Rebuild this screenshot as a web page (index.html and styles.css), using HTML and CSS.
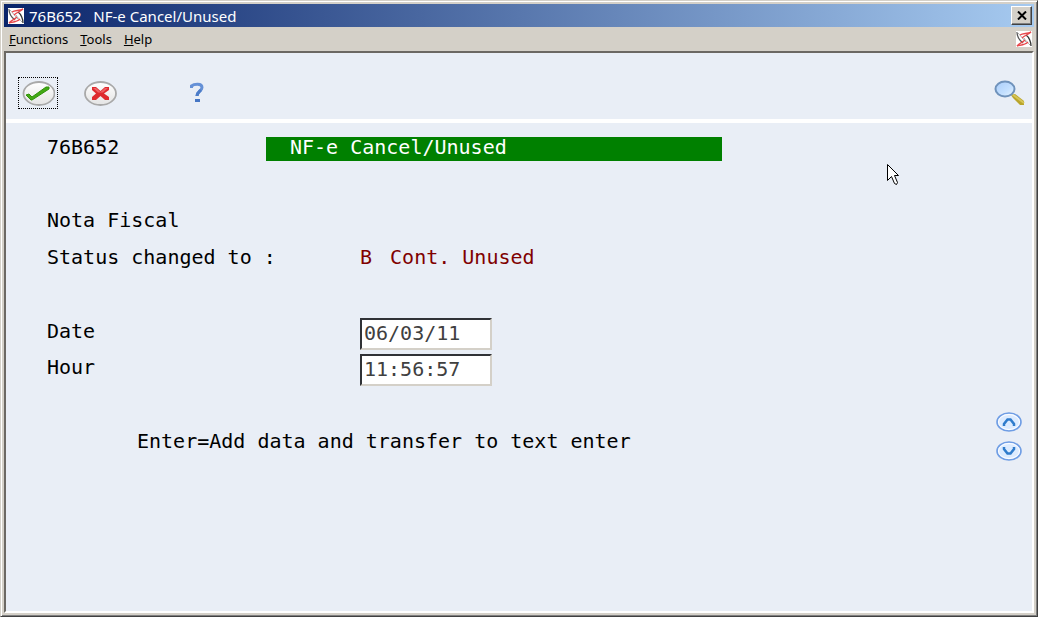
FILE: index.html
```html
<!DOCTYPE html>
<html lang="en">
<head>
<meta charset="utf-8">
<title>76B652 NF-e Cancel/Unused</title>
<link rel="stylesheet" href="styles.css">
</head>
<body>
<svg class="defs" aria-hidden="true">
  <symbol id="logo" viewBox="0 0 16 16">
    <rect width="16" height="16" fill="#fff"/>
    <g fill="none" stroke-width="1.300">
      <path d="M1 1C1 5 3 9 7 12" stroke="#555"/>
      <path d="M1 1C4 4 8 9 10 11" stroke="#aaa" stroke-width="1"/>
      <path d="M15 15C15 11 13 6 10 4" stroke="#333"/>
      <path d="M14 14C12 12 9 9 8 7" stroke="#aaa" stroke-width="1"/>
      <path d="M4 4C7 2 11 3 15 1C12 4 9 4 6 7M1 15C5 14 9 14 12 11M1 15C3 12 6 12 9 9" stroke="#e8484c"/>
    </g>
  </symbol>
  <linearGradient id="face" x1="0" y1="0" x2="0" y2="1"><stop offset="0" stop-color="#fff"/><stop offset="1" stop-color="#e4e4e4"/></linearGradient>
  <linearGradient id="glass" x1="0" y1="0" x2="1" y2="1"><stop offset="0" stop-color="#a9cdfb"/><stop offset=".6" stop-color="#c4e0ff"/><stop offset="1" stop-color="#eaf6ff"/></linearGradient>
</svg>
<div class="window">
  <header class="titlebar">
    <svg class="logo"><use href="#logo"/></svg>
    <h1 class="title">76B652 &nbsp; NF-e Cancel/Unused</h1>
    <button class="close" type="button" aria-label="Close">
      <svg width="10" height="9" viewBox="0 0 10 9"><path d="M1 0.500L9 8.500M9 0.500L1 8.500" stroke="#000" stroke-width="2"/></svg>
    </button>
  </header>
  <nav class="menubar">
    <button type="button"><u>F</u>unctions</button>
    <button type="button"><u>T</u>ools</button>
    <button type="button"><u>H</u>elp</button>
    <svg class="logo menu-logo"><use href="#logo"/></svg>
  </nav>
  <div class="content">
    <div class="toolbar">
      <button class="tool focused" type="button" aria-label="Accept">
        <svg width="34" height="26" viewBox="0 0 34 26">
          <ellipse cx="18" cy="13.500" rx="15.500" ry="11.500" fill="url(#face)" stroke="#a9a9a9" stroke-width="1.800"/>
          <path d="M5 15L8 14L11 17L25 7L28 7V9L11 20H10Z" fill="#43a914" stroke="#2f9208" stroke-width="1"/>
        </svg>
      </button>
      <button class="tool cancel" type="button" aria-label="Cancel">
        <svg width="34" height="26" viewBox="0 0 34 26">
          <ellipse cx="17.500" cy="13.500" rx="15.500" ry="11.500" fill="url(#face)" stroke="#a9a9a9" stroke-width="1.800"/>
          <path d="M9 7H13L17.500 11L22 7H26V10L21 13.500L26 17V20H22L17.500 16L13 20H9V17L13 13.500L9 10Z" fill="#de2a2e"/>
          <path d="M10 8H13L17.500 12L22 8H25L20 12.500H15Z" fill="#ee6064"/>
        </svg>
      </button>
      <button class="tool" type="button" aria-label="Help">
        <svg width="16" height="22" viewBox="0 0 16 22">
          <path d="M2.500 6V4C5 2 13 1 13 5.500C13 9 8 9 8 14" fill="none" stroke="#6590d6" stroke-width="3"/>
          <path d="M12 8C10 10 8 11 8 14" fill="none" stroke="#4c7cc8" stroke-width="3"/>
          <rect x="6" y="17" width="5" height="3" fill="#4676c4"/>
        </svg>
      </button>
      <button class="tool search" type="button" aria-label="Search">
        <svg width="32" height="26" viewBox="0 0 32 26">
          <path d="M17 15L21 14L30 21V25H26L19 18Z" fill="#b9a52c"/>
          <path d="M18 14L30 23" stroke="#d6c558" stroke-width="2"/>
          <ellipse cx="11" cy="9" rx="9.500" ry="7.500" fill="url(#glass)" stroke="#6f92bb" stroke-width="2"/>
        </svg>
      </button>
    </div>
    <main class="screen">
      <form class="form">
        <div class="label">76B652</div>
        <div class="banner">NF-e Cancel/Unused</div>
        <div class="label wide">Nota Fiscal</div>
        <div class="label">Status changed to :</div>
        <div class="status"><span>B</span><span>Cont. Unused</span></div>
        <label class="label" for="date">Date</label>
        <input class="field" id="date" value="06/03/11">
        <label class="label" for="hour">Hour</label>
        <input class="field" id="hour" value="11:56:57">
        <p class="hint">Enter=Add data and transfer to text enter</p>
      </form>
      <div class="pager">
        <button type="button" aria-label="Page up">
          <svg width="26" height="20" viewBox="0 0 26 20"><ellipse cx="13" cy="10" rx="12" ry="9" fill="#dcebff" stroke="#6f9de4" stroke-width="1.600"/><ellipse cx="13" cy="10" rx="10.500" ry="7.500" fill="none" stroke="#fff"/><path d="M8 14V12L11.500 7.500H14.500L18 12V14" fill="none" stroke="#2f7ccc" stroke-width="2.500"/></svg>
        </button>
        <button type="button" aria-label="Page down">
          <svg width="26" height="20" viewBox="0 0 26 20"><ellipse cx="13" cy="10" rx="12" ry="9" fill="#dcebff" stroke="#6f9de4" stroke-width="1.600"/><ellipse cx="13" cy="10" rx="10.500" ry="7.500" fill="none" stroke="#fff"/><path d="M8 6V8L11.500 12.500H14.500L18 8V6" fill="none" stroke="#2f7ccc" stroke-width="2.500"/></svg>
        </button>
      </div>
    </main>
  </div>
</div>
<svg class="pointer" width="12" height="21" viewBox="0 0 12 21" aria-hidden="true"><path d="M.5 .5V16.500L4.500 12.500L7.500 19.500L9.500 20.500L10.500 18.500L7.500 11.500H11.500Z" fill="#fff" stroke="#000"/></svg>
</body>
</html>
```

FILE: styles.css
```css
* { box-sizing: border-box; }
body { margin: 0; }
button { padding: 0; border: 0; background: none; font: inherit; color: inherit; }
svg { display: block; }
.defs { position: absolute; width: 0; height: 0; }

.window {
  display: flex;
  flex-direction: column;
  min-height: 100vh;
  padding: 3px;
  background: #d4d0c8;
  border: 1px solid;
  border-color: #d4d0c8 #404040 #404040 #d4d0c8;
  box-shadow: inset 1px 1px #fff, inset -1px -1px #808080;
  font-family: "Noto Sans", sans-serif;
}
.logo { width: 16px; height: 16px; flex: none; }

.titlebar {
  display: flex;
  align-items: center;
  height: 23px;
  padding: 0 2px 0 4px;
  gap: 5px;
  color: #fff;
  background: linear-gradient(90deg, #0a246a, #a6caf0);
}
.title {
  flex: 1;
  margin: 0;
  font: 15px/20px "Noto Sans", sans-serif;
  white-space: pre;
}
.close {
  display: flex;
  align-items: center;
  justify-content: center;
  width: 21px;
  height: 19px;
  background: #d4d0c8;
  border: 1px solid;
  border-color: #fff #404040 #404040 #fff;
  box-shadow: inset -1px -1px #808080;
}

.menubar {
  display: flex;
  align-items: center;
  height: 24px;
  padding: 0 2px 0 5px;
  gap: 12px;
  font-size: 13px;
  color: #000;
}
.menu-logo { margin-left: auto; }

.content {
  flex: 1;
  display: flex;
  flex-direction: column;
  background: #e9eef6;
  border: 2px solid;
  border-color: #6b6863 #fff #fff #6b6863;
}
.toolbar {
  display: flex;
  align-items: center;
  height: 70px;
  padding: 14px 6px 0 12px;
  border-bottom: 4px solid #fff;
}
.tool { display: flex; align-items: center; justify-content: center; width: 40px; height: 32px; }
.focused { border: 1px dotted #000; }
.cancel { margin: 0 57px 0 22px; }
.search { width: 32px; margin-left: auto; }

.screen {
  flex: 1;
  display: flex;
  justify-content: space-between;
  padding: 12px 10px 0 41px;
}
.form {
  flex: 1;
  display: grid;
  grid-template-columns: 219px 94px 1fr;
  grid-template-rows: 73px 37px 73px 36px 36px 38px;
  align-content: start;
  font: 20px/24px "DejaVu Sans Mono", monospace;
}
.label { grid-column: 1 / 3; white-space: pre; }
.form > :first-child { grid-column: 1; }
.wide { grid-column: 1 / -1; }
.banner {
  grid-column: 2 / -1;
  width: 456px;
  height: 24px;
  margin-top: 2px;
  padding-left: 24px;
  line-height: 20px;
  color: #fff;
  background: #008000;
}
.status { display: flex; gap: 18px; color: #800000; }
.form label { padding-top: 1px; }
.field {
  width: 132px;
  height: 32px;
  padding: 0 2px 2px;
  border: 2px solid;
  border-color: #303236 #d4d0c8 #d4d0c8 #303236;
  background: #fff;
  color: #404040;
  font: inherit;
}
.hint { grid-column: 1 / -1; grid-row: 6; margin: 0; padding: 39px 0 0 90px; white-space: pre; }

.pager {
  display: flex;
  flex-direction: column;
  gap: 9px;
  padding-top: 277px;
}
.pointer { position: absolute; left: 887px; top: 164px; }
```
